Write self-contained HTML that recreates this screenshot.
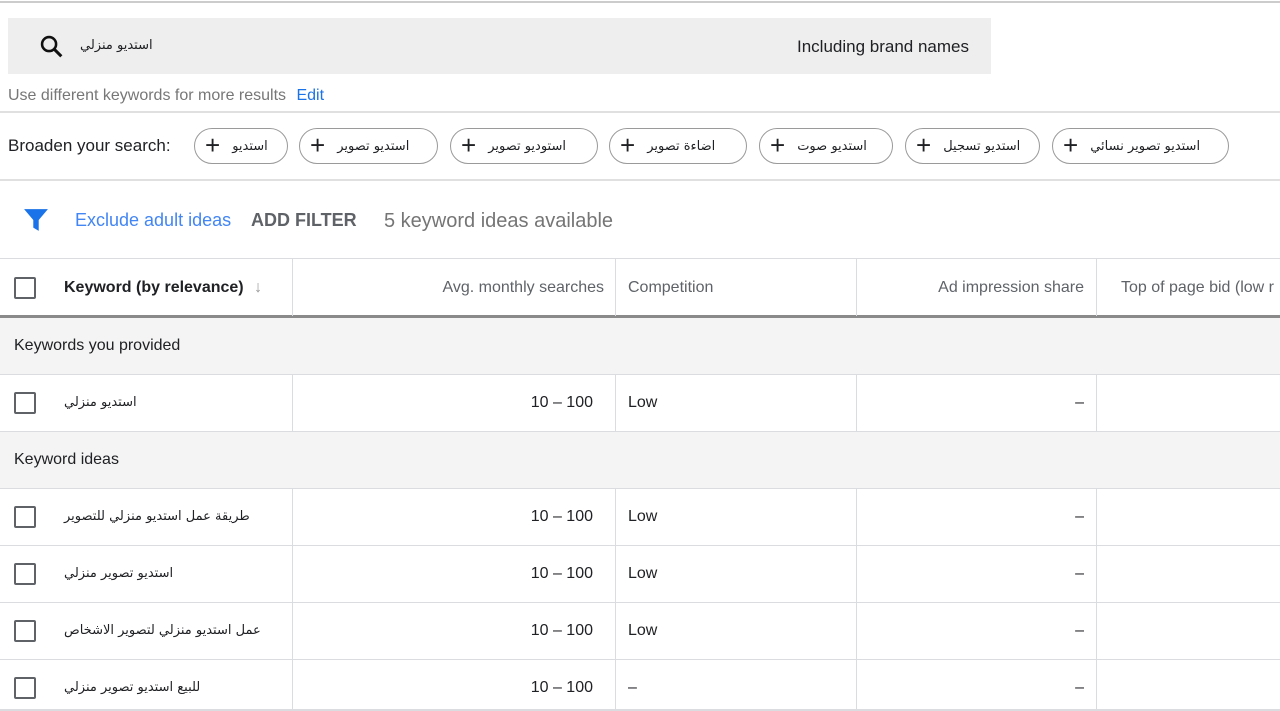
<!DOCTYPE html><html><head><meta charset="utf-8"><style>
*{margin:0;padding:0;box-sizing:border-box}
body{width:1280px;height:711px;overflow:hidden;background:#fff;font-family:"Liberation Sans","Noto Sans CJK SC",sans-serif;color:#202124;position:relative}
.a{position:absolute}
.ar{font-family:"DejaVu Sans","Noto Sans CJK SC",sans-serif;font-size:13px;direction:rtl;white-space:nowrap}
.chip{position:absolute;top:128px;height:36px;border:1px solid #9a9a9a;border-radius:18px;display:flex;align-items:center;padding:0 14px 0 10px;gap:12px;white-space:nowrap}
.chip .p{font-size:26px;font-weight:300;line-height:1;margin-top:-3px}
.hl{position:absolute;left:0;width:1280px;height:1px;background:#dadce0}
.vl{position:absolute;width:1px;background:#dadce0}
.cb{position:absolute;left:14px;width:22px;height:22px;border:2px solid #5f6368;border-radius:2px}
.t{position:absolute;font-size:16px}
</style></head><body>
<div class="hl" style="top:1px;height:2px;background:#ccc"></div>
<div class="a" style="left:8px;top:18px;width:983px;height:56px;background:#eeeeee"></div>
<svg class="a" style="left:38px;top:33px" width="28" height="28" viewBox="0 0 24 24"><circle cx="9.5" cy="9.5" r="6" fill="none" stroke="#111" stroke-width="2.2"/><path d="M14 14l6 6" stroke="#111" stroke-width="2.6"/></svg>
<div class="a ar" style="left:80px;top:38px;direction:ltr">استديو منزلي</div>
<div class="t" style="left:797px;top:37px;font-size:17px">Including brand names</div>
<div class="t" style="left:8px;top:87px;color:#777">Use different keywords for more results <span style="color:#1a73e8;margin-left:6px">Edit</span></div>
<div class="hl" style="top:111px;height:2px;background:#e0e0e0"></div>
<div class="t" style="left:8px;top:136px;font-size:17px">Broaden your search:</div>
<div class="chip" style="left:194px;width:94px"><span class="p">+</span><span class="ar">استديو</span></div>
<div class="chip" style="left:299px;width:139px"><span class="p">+</span><span class="ar">استديو تصوير</span></div>
<div class="chip" style="left:450px;width:148px"><span class="p">+</span><span class="ar">استوديو تصوير</span></div>
<div class="chip" style="left:609px;width:138px"><span class="p">+</span><span class="ar">اضاءة تصوير</span></div>
<div class="chip" style="left:759px;width:134px"><span class="p">+</span><span class="ar">استديو صوت</span></div>
<div class="chip" style="left:905px;width:135px"><span class="p">+</span><span class="ar">استديو تسجيل</span></div>
<div class="chip" style="left:1052px;width:177px"><span class="p">+</span><span class="ar">استديو تصوير نسائي</span></div>
<div class="hl" style="top:179px;height:2px;background:#e0e0e0"></div>
<svg class="a" style="left:23px;top:207px" width="26" height="26" viewBox="0 0 24 24"><path d="M1 2h22l-8.5 10v10l-5-3v-7z" fill="#1a73e8"/></svg>
<div class="t" style="left:75px;top:210px;font-size:18px;color:#4285f4">Exclude adult ideas</div>
<div class="t" style="left:251px;top:210px;font-size:18px;font-weight:bold;color:#5f6368">ADD FILTER</div>
<div class="t" style="left:384px;top:210px;font-size:20px;color:#757575">5 keyword ideas available</div>
<div class="hl" style="top:258px"></div>
<div class="hl" style="top:315px;height:3px;background:#8a8a8a"></div>
<div class="a" style="left:0;top:318px;width:1280px;height:56px;background:#f4f4f4"></div>
<div class="a" style="left:0;top:432px;width:1280px;height:56px;background:#f4f4f4"></div>
<div class="hl" style="top:374px"></div><div class="hl" style="top:431px"></div><div class="hl" style="top:488px"></div><div class="hl" style="top:545px"></div><div class="hl" style="top:602px"></div><div class="hl" style="top:659px"></div><div class="hl" style="top:709px;height:2px"></div>
<div class="vl" style="left:292px;top:259px;height:57px"></div><div class="vl" style="left:615px;top:259px;height:57px"></div><div class="vl" style="left:856px;top:259px;height:57px"></div><div class="vl" style="left:1096px;top:259px;height:57px"></div>
<div class="vl" style="left:292px;top:375px;height:56px"></div><div class="vl" style="left:615px;top:375px;height:56px"></div><div class="vl" style="left:856px;top:375px;height:56px"></div><div class="vl" style="left:1096px;top:375px;height:56px"></div>
<div class="vl" style="left:292px;top:489px;height:222px"></div><div class="vl" style="left:615px;top:489px;height:222px"></div><div class="vl" style="left:856px;top:489px;height:222px"></div><div class="vl" style="left:1096px;top:489px;height:222px"></div>
<div class="cb" style="top:277px"></div>
<div class="t" style="left:64px;top:279px;font-weight:bold">Keyword (by relevance) <span style="color:#999;font-weight:normal;margin-left:6px">↓</span></div>
<div class="t" style="left:300px;width:304px;text-align:right;top:279px;color:#5f6368">Avg. monthly searches</div>
<div class="t" style="left:628px;top:279px;color:#5f6368">Competition</div>
<div class="t" style="left:860px;width:224px;text-align:right;top:279px;color:#5f6368">Ad impression share</div>
<div class="t" style="left:1121px;top:279px;color:#5f6368;white-space:nowrap">Top of page bid (low r</div>
<div class="t" style="left:14px;top:337px">Keywords you provided</div>
<div class="t" style="left:14px;top:451px">Keyword ideas</div>
<div class="cb" style="top:392px"></div><div class="a ar" style="left:64px;top:395px;direction:ltr">استديو منزلي</div>
<div class="t" style="left:300px;width:293px;text-align:right;top:394px">10 – 100</div><div class="t" style="left:628px;top:394px">Low</div><div class="t" style="left:860px;width:224px;text-align:right;top:394px">–</div>
<div class="cb" style="top:506px"></div><div class="a ar" style="left:64px;top:509px;direction:ltr">طريقة عمل استديو منزلي للتصوير</div>
<div class="t" style="left:300px;width:293px;text-align:right;top:508px">10 – 100</div><div class="t" style="left:628px;top:508px">Low</div><div class="t" style="left:860px;width:224px;text-align:right;top:508px">–</div>
<div class="cb" style="top:563px"></div><div class="a ar" style="left:64px;top:566px;direction:ltr">استديو تصوير منزلي</div>
<div class="t" style="left:300px;width:293px;text-align:right;top:565px">10 – 100</div><div class="t" style="left:628px;top:565px">Low</div><div class="t" style="left:860px;width:224px;text-align:right;top:565px">–</div>
<div class="cb" style="top:620px"></div><div class="a ar" style="left:64px;top:623px;direction:ltr">عمل استديو منزلي لتصوير الاشخاص</div>
<div class="t" style="left:300px;width:293px;text-align:right;top:622px">10 – 100</div><div class="t" style="left:628px;top:622px">Low</div><div class="t" style="left:860px;width:224px;text-align:right;top:622px">–</div>
<div class="cb" style="top:677px"></div><div class="a ar" style="left:64px;top:680px;direction:ltr">للبيع استديو تصوير منزلي</div>
<div class="t" style="left:300px;width:293px;text-align:right;top:679px">10 – 100</div><div class="t" style="left:628px;top:679px">–</div><div class="t" style="left:860px;width:224px;text-align:right;top:679px">–</div>
</body></html>
